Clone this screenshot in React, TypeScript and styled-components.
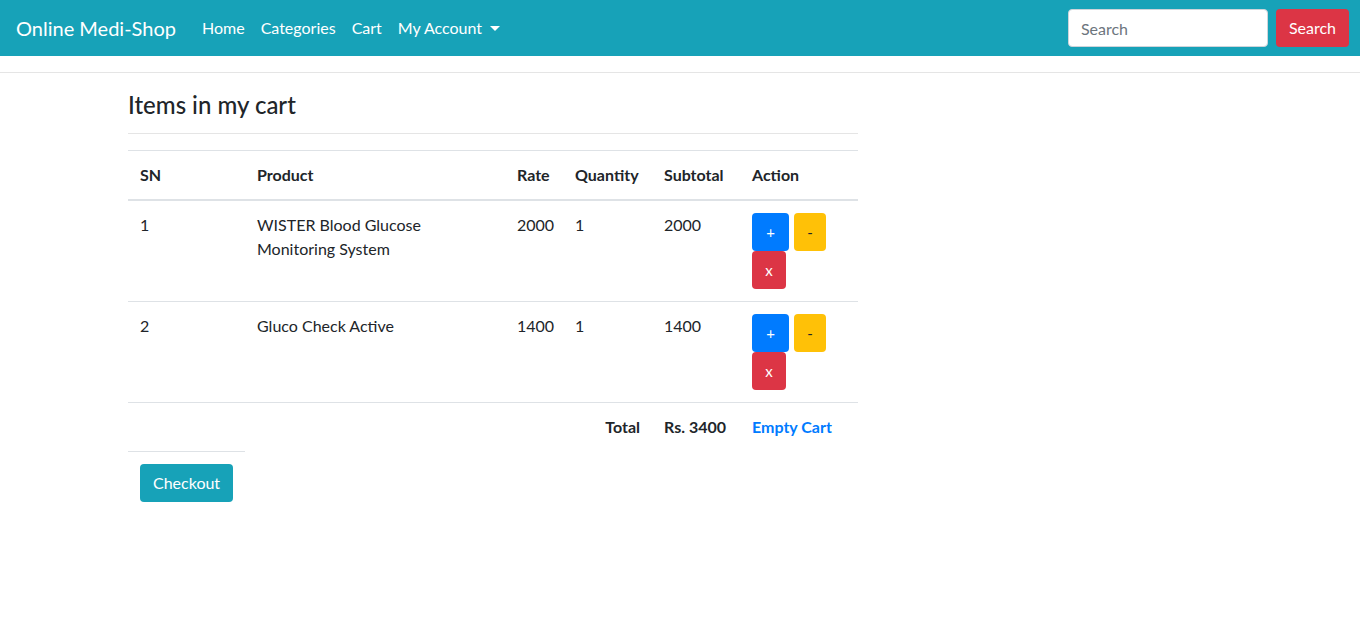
import React from "react";
import styled, { createGlobalStyle } from "styled-components";

const Global = createGlobalStyle`
  * { box-sizing: border-box; }
  body {
    margin: 0;
    font-family: "Lato", "Liberation Sans", sans-serif;
    font-size: 16px;
    line-height: 1.5;
    color: #212529;
    background: #fff;
  }
`;

const Navbar = styled.nav`
  height: 56px;
  background: #17a2b8;
  display: flex;
  align-items: center;
  padding: 0 11px 0 16px;
`;

const Brand = styled.a`
  color: #fff;
  font-size: 20px;
  line-height: 30px;
  margin-right: 18px;
  text-decoration: none;
`;

const NavList = styled.ul`
  display: flex;
  list-style: none;
  margin: 0;
  padding: 0;
  flex: 1;
`;

const NavLink = styled.a<{ $dropdown?: boolean }>`
  display: inline-flex;
  align-items: center;
  padding: 8px;
  color: #fff;
  text-decoration: none;
  font-size: 16px;
  ${(p) =>
    p.$dropdown &&
    `&::after {
      content: "";
      margin-left: 8px;
      border-top: 5px solid #fff;
      border-left: 5px solid transparent;
      border-right: 5px solid transparent;
    }`}
`;

const SearchForm = styled.form`
  display: flex;
  align-items: center;
  gap: 8px;
`;

const SearchInput = styled.input`
  width: 200px;
  height: 38px;
  padding: 6px 12px;
  font-family: inherit;
  font-size: 16px;
  color: #495057;
  border: 1px solid #ced4da;
  border-radius: 4px;
  background: #fff;
  &::placeholder { color: #6c757d; }
`;

const Btn = styled.button<{ $variant: "primary" | "warning" | "danger" | "info" }>`
  display: inline-block;
  font-family: inherit;
  font-size: 16px;
  line-height: 24px;
  padding: 6px 12px;
  border-radius: 4px;
  border: 1px solid transparent;
  cursor: pointer;
  background: ${(p) =>
    ({ primary: "#007bff", warning: "#ffc107", danger: "#dc3545", info: "#17a2b8" } as const)[p.$variant]};
  color: ${(p) => (p.$variant === "warning" ? "#212529" : "#fff")};
`;

const SmallBtn = styled(Btn)<{ $w: number }>`
  width: ${(p) => p.$w}px;
  padding: 6px 0;
  text-align: center;
  font-size: 15px;
`;

const TopRule = styled.hr`
  margin: 16px 0 0;
  border: 0;
  border-top: 1px solid rgba(0, 0, 0, 0.1);
`;

const Main = styled.main`
  padding: 18px 0 0 128px;
  width: 858px;
`;

const Title = styled.h4`
  margin: 0 0 13px;
  font-size: 24px;
  font-weight: 500;
  line-height: 1.2;
`;

const Rule = styled.hr`
  margin: 0 0 16px;
  border: 0;
  border-top: 1px solid rgba(0, 0, 0, 0.1);
`;

const Table = styled.table`
  width: 730px;
  border-collapse: collapse;
  table-layout: fixed;
`;

const Th = styled.th`
  padding: 12px;
  text-align: left;
  vertical-align: bottom;
  font-weight: 700;
  border-top: 1px solid #dee2e6;
  border-bottom: 2px solid #dee2e6;
`;

const Td = styled.td<{ $bold?: boolean; $right?: boolean }>`
  padding: 12px;
  vertical-align: top;
  border-top: 1px solid #dee2e6;
  font-weight: ${(p) => (p.$bold ? 700 : 400)};
  text-align: ${(p) => (p.$right ? "right" : "left")};
`;

const Actions = styled.div`
  display: flex;
  flex-wrap: wrap;
  column-gap: 5px;
`;

const LinkText = styled.a`
  color: #007bff;
  text-decoration: none;
  font-weight: 700;
`;

const items = [
  { sn: 1, name: "WISTER Blood Glucose Monitoring System", rate: 2000, qty: 1 },
  { sn: 2, name: "Gluco Check Active", rate: 1400, qty: 1 },
];

const widths = [117, 260, 58, 89, 88, 118];

export default function App() {
  const total = items.reduce((s, i) => s + i.rate * i.qty, 0);
  return (
    <>
      <Global />
      <Navbar>
        <Brand href="#">Online Medi-Shop</Brand>
        <NavList>
          <li><NavLink href="#">Home</NavLink></li>
          <li><NavLink href="#">Categories</NavLink></li>
          <li><NavLink href="#">Cart</NavLink></li>
          <li><NavLink href="#" $dropdown>My Account</NavLink></li>
        </NavList>
        <SearchForm onSubmit={(e) => e.preventDefault()}>
          <SearchInput type="search" placeholder="Search" />
          <Btn $variant="danger" type="submit">Search</Btn>
        </SearchForm>
      </Navbar>
      <TopRule />
      <Main>
        <Title>Items in my cart</Title>
        <Rule />
        <Table>
          <colgroup>
            {widths.map((w, i) => <col key={i} style={{ width: w }} />)}
          </colgroup>
          <thead>
            <tr>
              <Th>SN</Th>
              <Th>Product</Th>
              <Th>Rate</Th>
              <Th>Quantity</Th>
              <Th>Subtotal</Th>
              <Th>Action</Th>
            </tr>
          </thead>
          <tbody>
            {items.map((it) => (
              <tr key={it.sn}>
                <Td>{it.sn}</Td>
                <Td>{it.name}</Td>
                <Td>{it.rate}</Td>
                <Td>{it.qty}</Td>
                <Td>{it.rate * it.qty}</Td>
                <Td>
                  <Actions>
                    <SmallBtn $variant="primary" $w={37}>+</SmallBtn>
                    <SmallBtn $variant="warning" $w={32}>-</SmallBtn>
                    <SmallBtn $variant="danger" $w={34}>x</SmallBtn>
                  </Actions>
                </Td>
              </tr>
            ))}
            <tr>
              <Td colSpan={4} $bold $right>Total</Td>
              <Td $bold>Rs. {total}</Td>
              <Td><LinkText href="#">Empty Cart</LinkText></Td>
            </tr>
            <tr>
              <Td>
                <Btn $variant="info">Checkout</Btn>
              </Td>
            </tr>
          </tbody>
        </Table>
      </Main>
    </>
  );
}
